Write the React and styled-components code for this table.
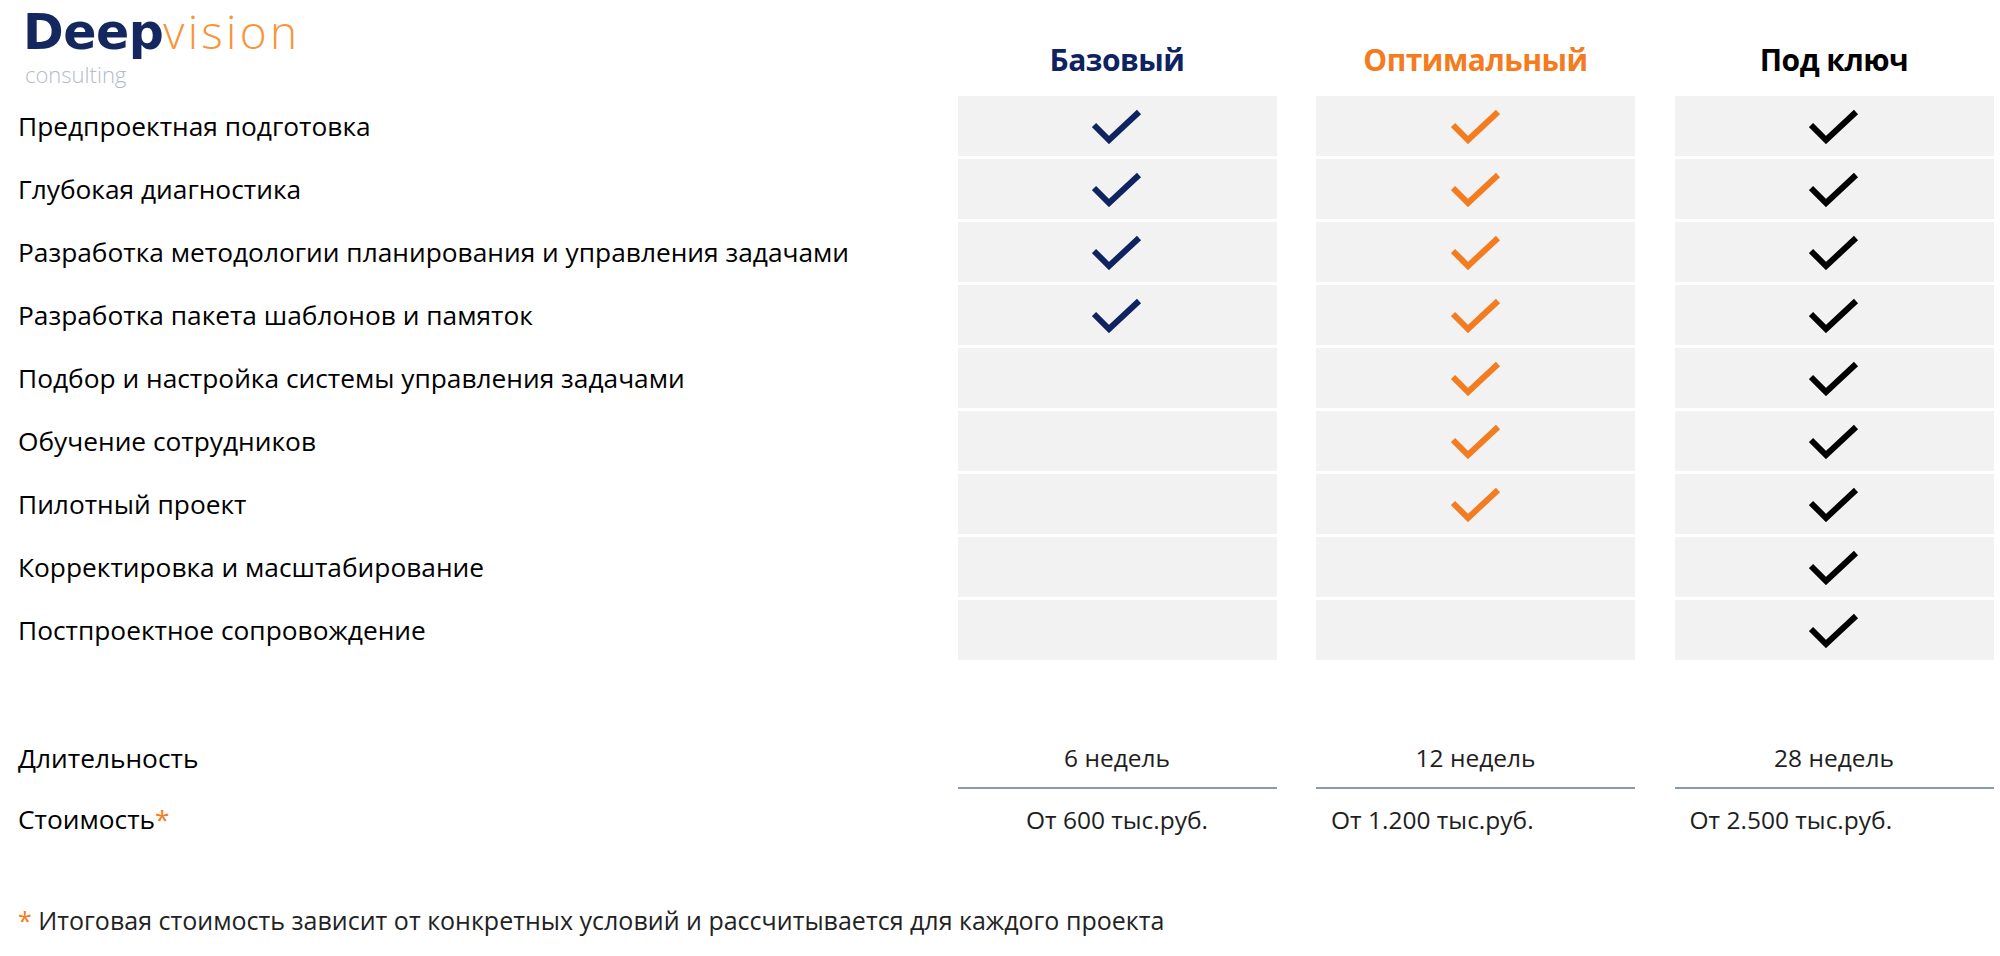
import React from 'react';
import styled, { createGlobalStyle } from 'styled-components';

const NAVY = '#0f2361';
const ORANGE = '#f47c20';

const plans = [
  { title: 'Базовый', color: NAVY, count: 4, weeks: '6 недель', price: 'От 600 тыс.руб.', align: 'center' },
  { title: 'Оптимальный', color: ORANGE, count: 7, weeks: '12 недель', price: 'От 1.200 тыс.руб.', align: 'left' },
  { title: 'Под ключ', color: '#000', count: 9, weeks: '28 недель', price: 'От 2.500 тыс.руб.', align: 'left' },
];

const features = [
  'Предпроектная подготовка',
  'Глубокая диагностика',
  'Разработка методологии планирования и управления задачами',
  'Разработка пакета шаблонов и памяток',
  'Подбор и настройка системы управления задачами',
  'Обучение сотрудников',
  'Пилотный проект',
  'Корректировка и масштабирование',
  'Постпроектное сопровождение',
];

const Check = ({ color }) => (
  <svg width="50" height="35" viewBox="0 0 50 35">
    <polyline
      points="2,16 17,31 47,3"
      fill="none"
      stroke={color}
      strokeWidth="6"
      strokeLinecap="butt"
      strokeLinejoin="miter"
    />
  </svg>
);

const App = () => {
  return (
    <Page>
      <GlobalStyle />
      <Head>
        <Logo>
          <LogoLine>
            <Deep>Deep</Deep>
            <Vision>vision</Vision>
          </LogoLine>
          <Consulting>consulting</Consulting>
        </Logo>
        {plans.map((p) => (
          <PlanTitle key={p.title} $color={p.color}>
            {p.title}
          </PlanTitle>
        ))}
      </Head>

      <Table>
        {features.map((f, i) => (
          <React.Fragment key={f}>
            <Label>{f}</Label>
            {plans.map((p) => (
              <Cell key={p.title}>{i < p.count && <Check color={p.color} />}</Cell>
            ))}
          </React.Fragment>
        ))}
      </Table>

      <Summary>
        <Label>Длительность</Label>
        {plans.map((p) => (
          <Duration key={p.title}>{p.weeks}</Duration>
        ))}
        <Label>
          Стоимость<Star>*</Star>
        </Label>
        {plans.map((p) => (
          <Price key={p.title} $align={p.align}>
            {p.price}
          </Price>
        ))}
      </Summary>

      <Note>
        <Star>*</Star> Итоговая стоимость зависит от конкретных условий и рассчитывается для каждого проекта
      </Note>
    </Page>
  );
};

const GlobalStyle = createGlobalStyle`
  html, body {
    margin: 0;
    padding: 0;
    background: #fff;
  }
  body {
    font-family: "Open Sans", "Noto Sans", sans-serif;
    color: #000;
  }
`;

const Page = styled.div`
  box-sizing: border-box;
  width: 2000px;
  height: 956px;
  padding: 0 7px 0 18px;
  overflow: hidden;
`;

const Grid = styled.div`
  display: grid;
  grid-template-columns: 900px repeat(3, 319px);
  column-gap: 39.5px;
`;

// шапка
const Head = styled(Grid)`
  height: 96px;
  align-items: end;
`;

const Logo = styled.div`
  align-self: start;
  display: flex;
  flex-direction: column;
  margin: 7px 0 0 5px;
`;

const LogoLine = styled.div`
  display: flex;
  align-items: baseline;
  height: 48px;
  line-height: 48px;
`;

const Deep = styled.span`
  font-family: "DejaVu Sans", sans-serif;
  font-weight: 700;
  font-size: 49px;
  letter-spacing: -0.5px;
  color: #14285f;
`;

const Vision = styled.span`
  font-family: "Open Sans", sans-serif;
  font-weight: 300;
  font-size: 46px;
  letter-spacing: 3.3px;
  color: #f7953b;
`;

const Consulting = styled.span`
  margin-top: 6px;
  margin-left: 2px;
  font-family: "Open Sans", sans-serif;
  font-weight: 300;
  font-size: 22px;
  line-height: 26px;
  color: #b4b9cb;
`;

const PlanTitle = styled.div`
  margin-bottom: 16px;
  text-align: center;
  font-size: 30px;
  font-weight: 700;
  line-height: 40px;
  letter-spacing: -0.5px;
  color: ${(p) => p.$color};
`;

// таблица
const Table = styled(Grid)`
  grid-auto-rows: 60px;
  row-gap: 3px;
`;

const Label = styled.div`
  display: flex;
  align-items: center;
  font-size: 26.3px;
  color: #000;
  white-space: nowrap;
`;

const Cell = styled.div`
  display: flex;
  align-items: center;
  justify-content: center;
  background: #f2f2f2;
`;

// итоги
const Summary = styled(Grid)`
  margin-top: 67px;
  grid-template-rows: 62px 60px;
`;

const Value = styled.div`
  display: flex;
  align-items: center;
  box-sizing: border-box;
  font-size: 24.5px;
  color: #1e1e1e;
  white-space: nowrap;
`;

const Duration = styled(Value)`
  justify-content: center;
  border-bottom: 2px solid #8a99b5;
`;

const Price = styled(Value)`
  justify-content: ${(p) => (p.$align === 'center' ? 'center' : 'flex-start')};
  padding-left: ${(p) => (p.$align === 'center' ? '0' : '15px')};
`;

const Star = styled.span`
  color: ${ORANGE};
`;

const Note = styled.div`
  margin-top: 54px;
  font-size: 25px;
  line-height: 34px;
  color: #222;
`;

export default App;
